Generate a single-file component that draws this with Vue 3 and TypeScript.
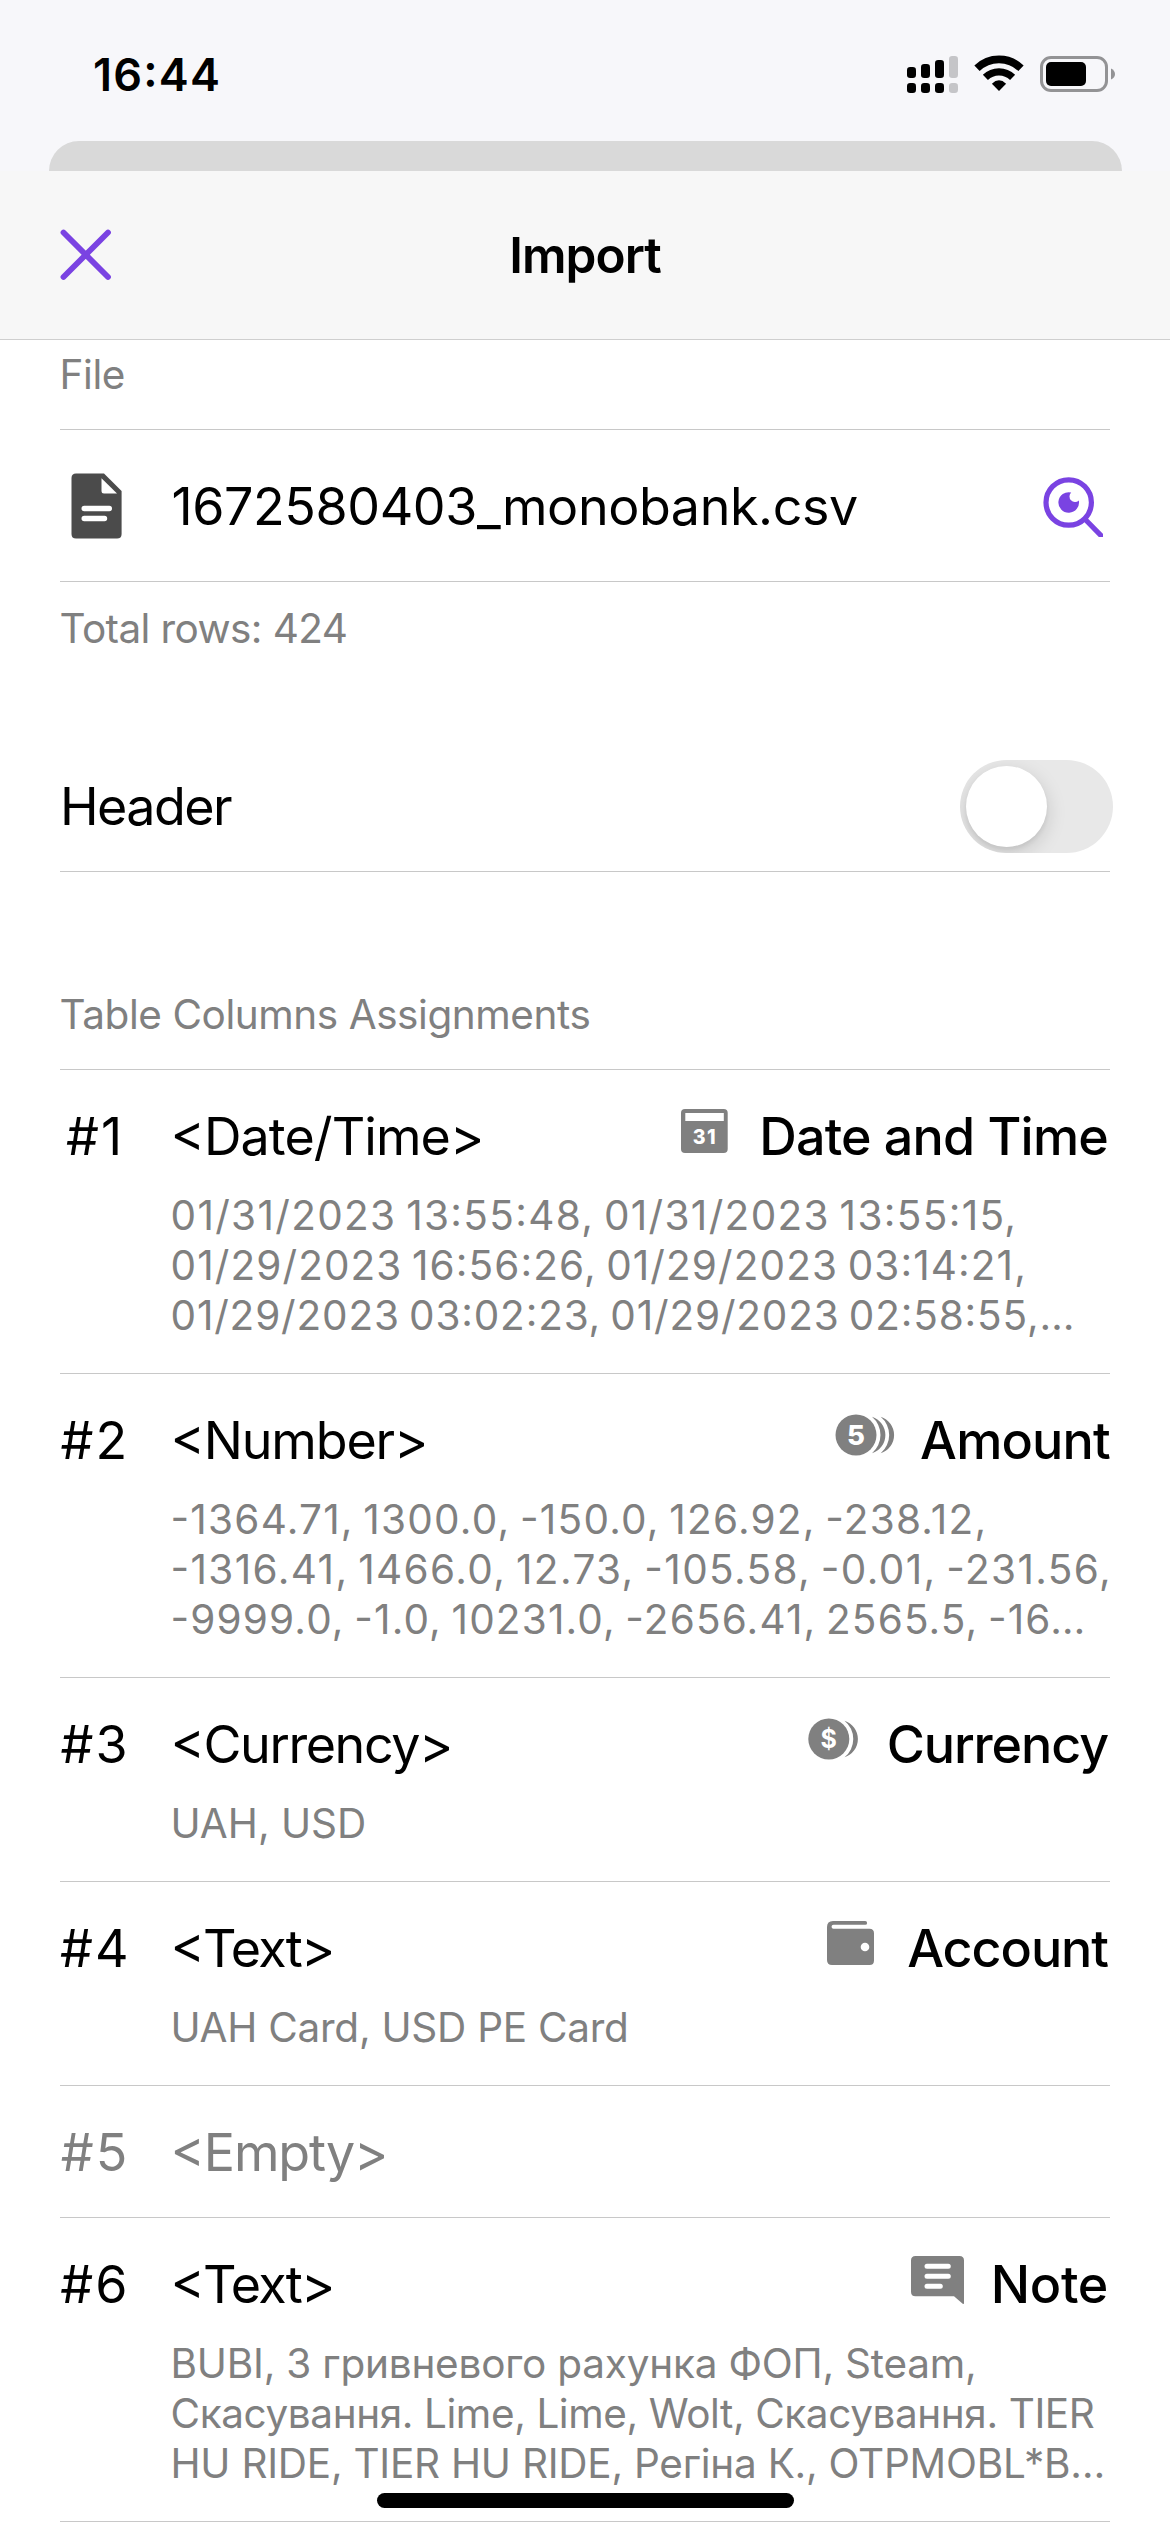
<script setup lang="ts">
import { ref } from 'vue'

type IconName = 'calendar' | 'amount' | 'currency' | 'wallet' | 'note'

interface Line {
  text: string
  tracking: number
}

interface ColumnRow {
  id: number
  type: Line
  target?: Line & { icon: IconName }
  numeric?: boolean
  samples: Line[]
}

const hasHeader = ref(false)

const rows: ColumnRow[] = [
  {
    id: 1,
    type: { text: '<Date/Time>', tracking: -0.92 },
    target: { text: 'Date and Time', tracking: -0.81, icon: 'calendar' },
    numeric: true,
    samples: [
      { text: '01/31/2023 13:55:48, 01/31/2023 13:55:15,', tracking: 1.33 },
      { text: '01/29/2023 16:56:26, 01/29/2023 03:14:21,', tracking: 1.1 },
      { text: '01/29/2023 03:02:23, 01/29/2023 02:58:55,…', tracking: 0.83 },
    ],
  },
  {
    id: 2,
    type: { text: '<Number>', tracking: -1.16 },
    target: { text: 'Amount', tracking: -0.8, icon: 'amount' },
    numeric: true,
    samples: [
      { text: '-1364.71, 1300.0, -150.0, 126.92, -238.12,', tracking: 1.23 },
      { text: '-1316.41, 1466.0, 12.73, -105.58, -0.01, -231.56,', tracking: 1.38 },
      { text: '-9999.0, -1.0, 10231.0, -2656.41, 2565.5, -16…', tracking: 1.16 },
    ],
  },
  {
    id: 3,
    type: { text: '<Currency>', tracking: -1.41 },
    target: { text: 'Currency', tracking: -1.09, icon: 'currency' },
    samples: [{ text: 'UAH, USD', tracking: 0 }],
  },
  {
    id: 4,
    type: { text: '<Text>', tracking: -1.79 },
    target: { text: 'Account', tracking: -1.05, icon: 'wallet' },
    samples: [{ text: 'UAH Card, USD PE Card', tracking: -0.26 }],
  },
  {
    id: 5,
    type: { text: '<Empty>', tracking: -1.13 },
    samples: [],
  },
  {
    id: 6,
    type: { text: '<Text>', tracking: -1.79 },
    target: { text: 'Note', tracking: -0.31, icon: 'note' },
    samples: [
      { text: 'BUBI, З гривневого рахунка ФОП, Steam,', tracking: -0.21 },
      { text: 'Скасування. Lime, Lime, Wolt, Скасування. TIER', tracking: -0.41 },
      { text: 'HU RIDE, TIER HU RIDE, Регіна К., OTPMOBL*B…', tracking: -0.25 },
    ],
  },
]

const spacing = (line: Line) => ({ letterSpacing: `${line.tracking}px` })
</script>

<template>
  <div class="screen">
    <div class="status">
      <span class="clock">16:44</span>
      <svg class="status-icons" width="210" height="42" viewBox="906 53 210 42">
        <rect x="907" y="67" width="9" height="11" rx="3.2" />
        <rect x="921" y="64" width="9" height="14" rx="3.2" />
        <rect x="935" y="60" width="9" height="18" rx="3.2" />
        <rect x="949" y="56" width="9" height="22" rx="3.2" fill="#c5c5c8" />
        <rect x="907" y="83" width="9" height="10" rx="3.2" />
        <rect x="921" y="83" width="9" height="10" rx="3.2" />
        <rect x="935" y="83" width="9" height="10" rx="3.2" />
        <rect x="949" y="83" width="9" height="10" rx="3.2" fill="#c5c5c8" />
        <path d="M977 68.3A31.6 31.6 0 0 1 1021 68.3" fill="none" stroke="#000" stroke-width="7.6" />
        <path d="M985.4 77.4A19.3 19.3 0 0 1 1012.6 77.4" fill="none" stroke="#000" stroke-width="7.2" />
        <path d="M999 91L991.9 83.7Q999 76.8 1006.1 83.7Z" />
        <rect x="1041.5" y="57.5" width="65" height="33" rx="9.5" fill="none" stroke="#939395" stroke-width="3" />
        <rect x="1046" y="62" width="40" height="24" rx="5" />
        <path d="M1111 68.4Q1115 70.4 1115 74T1111 79.6Z" fill="#939395" />
      </svg>
    </div>
    <div class="backdrop-card"></div>

    <div class="navbar">
      <svg class="close" width="52" height="52" viewBox="0 0 52 52">
        <path d="M3.5 3.5L48 48M48 3.5L3.5 48" fill="none" stroke="#7a43e2" stroke-width="5.8" stroke-linecap="round" />
      </svg>
      <h1 class="title">Import</h1>
    </div>

    <main class="content">
      <div class="label file-label">File</div>
      <div class="file-row">
        <svg class="doc" width="52" height="66" viewBox="0 0 52 66">
          <path fill="#4b4b4b" d="M5 .5H33L50.6 18V61Q50.6 65.500 46 65.500H5Q.5 65.500 .5 61V5Q.5 .5 5 .5Z" />
          <path fill="#fff" d="M30.500 5.200L46 20.500H33Q30.500 20.500 30.500 18Z" />
          <path d="M13.200 35.500H38.300M13.200 45.500H33.500" stroke="#fff" stroke-width="5.400" stroke-linecap="round" />
        </svg>
        <span class="filename">1672580403_monobank.csv</span>
        <svg class="preview" width="62" height="62" viewBox="0 0 62 62">
          <g fill="none" stroke="#7a43e2" stroke-width="5.200" stroke-linecap="round">
            <circle cx="27.700" cy="27.500" r="22.700" />
            <path d="M44.300 44.500L60 60.500" />
          </g>
          <path fill="#7a43e2" d="M30.200 17.500A10.300 10.300 0 1 0 37.800 25.500A5.400 5.400 0 0 1 30.200 17.500Z" />
        </svg>
      </div>
      <div class="label total">Total rows: 424</div>

      <div class="header-row">
        <span class="header-text">Header</span>
        <button class="toggle" :class="{ on: hasHeader }" aria-label="Header" @click="hasHeader = !hasHeader">
          <span class="knob"></span>
        </button>
      </div>

      <div class="label table-label">Table Columns Assignments</div>

      <div v-for="row in rows" :key="row.id" class="row" :class="{ empty: !row.target }">
        <div class="index">#{{ row.id }}</div>
        <div class="body">
          <div class="head">
            <span class="type" :style="spacing(row.type)">{{ row.type.text }}</span>
            <div v-if="row.target" class="target">
              <svg class="icon" width="66" height="64" viewBox="0 0 66 64" fill="#808080">
                <template v-if="row.target.icon === 'calendar'">
                  <rect x="10" y="5" width="46.700" height="44" rx="4" />
                  <rect x="14.300" y="9" width="38.500" height="8" fill="#fff" />
                  <text x="34" y="40" class="glyph day">31</text>
                </template>
                <template v-else-if="row.target.icon === 'amount'">
                  <circle cx="24" cy="27" r="20.500" />
                  <path d="M40 8.700A19.200 19.200 0 0 1 40 45.300A24 24 0 0 0 40 8.700Z" />
                  <path d="M48.700 8.700A19.200 19.200 0 0 1 48.700 45.300A24 24 0 0 0 48.700 8.700Z" />
                  <text x="24" y="37" class="glyph five">5</text>
                </template>
                <template v-else-if="row.target.icon === 'currency'">
                  <circle cx="29.800" cy="27" r="20.500" />
                  <path d="M45.500 8.700A19.200 19.200 0 0 1 45.500 45.300A23.500 23.500 0 0 0 45.500 8.700Z" />
                  <text x="29.800" y="36" class="glyph dollar">$</text>
                </template>
                <template v-else-if="row.target.icon === 'wallet'">
                  <path d="M14 5H46.200A1.900 1.900 0 0 1 46.200 8.800H14.500A1.900 1.900 0 0 0 14.500 12.700H50.500Q55 12.700 55 17.200V44.500Q55 49 50.500 49H13Q8 49 8 44V11Q8 5 14 5Z" />
                  <circle cx="46" cy="31" r="4.300" fill="#fff" />
                </template>
                <template v-else>
                  <path d="M12.500 4H56.500Q61 4 61 8.500V51Q61 52.500 59.700 51.700L51 44.300H12.500Q8 44.300 8 39.800V8.500Q8 4 12.500 4Z" />
                  <path d="M24 14.300H45.300M24 24.300H45.300M24 34.300H37.300" stroke="#fff" stroke-width="5" stroke-linecap="round" />
                </template>
              </svg>
              <span class="target-name" :style="spacing(row.target)">{{ row.target.text }}</span>
            </div>
          </div>
          <div v-if="row.samples.length" class="samples" :class="{ numeric: row.numeric }">
            <div v-for="line in row.samples" :key="line.text" :style="spacing(line)">{{ line.text }}</div>
          </div>
        </div>
      </div>
    </main>

    <div class="home-indicator"></div>
  </div>
</template>

<style>
body {
  margin: 0;
  background: #fff;
}
</style>

<style scoped>
.screen {
  position: relative;
  width: 1170px;
  height: 2532px;
  overflow: hidden;
  background: #fff;
  color: #000;
  font-family: Inter, "Noto Sans", sans-serif;
  font-feature-settings: "calt" 1;
  white-space: nowrap;
}

.status {
  display: flex;
  justify-content: space-between;
  align-items: flex-start;
  box-sizing: border-box;
  height: 171px;
  padding: 53px 54px 0 93px;
  background: #f7f7fa;
}

.clock {
  font-size: 45px;
  font-weight: 600;
  line-height: 43px;
  letter-spacing: 1.22px;
}

.backdrop-card {
  height: 30px;
  margin: -30px 48px 0 48.500px;
  border-radius: 30px 30px 0 0;
  background: #d9d9d9;
}

.navbar {
  display: grid;
  grid-template-columns: 52px 1fr 52px;
  align-items: center;
  height: 168px;
  padding: 0 60px;
  background: #f7f7f7;
  border-bottom: 1px solid #cfcfcf;
}

.title {
  margin: 0;
  font-size: 49.500px;
  font-weight: 600;
  line-height: 60px;
  letter-spacing: -0.97px;
  text-align: center;
}

.content {
  padding: 0 60px;
}

.label {
  color: #808080;
  font-size: 40.500px;
  line-height: 50px;
}

.file-label {
  padding: 10px 0 29px;
  letter-spacing: -0.4px;
  text-indent: -0.5px;
}

.file-row {
  display: flex;
  align-items: center;
  box-sizing: border-box;
  height: 153px;
  padding: 0 7px 0 11px;
  border-top: 1px solid #c8c8c8;
  border-bottom: 1px solid #c8c8c8;
}

.filename {
  flex: 1;
  margin-left: 48.500px;
  padding-top: 2px;
  font-size: 52px;
  line-height: 64px;
  letter-spacing: -0.42px;
}

.total {
  padding-top: 22px;
  letter-spacing: -0.6px;
  text-indent: -0.5px;
}

.header-row {
  display: flex;
  align-items: center;
  justify-content: space-between;
  height: 130px;
  margin-top: 87px;
  border-bottom: 1px solid #c8c8c8;
}

.header-text {
  padding-top: 2px;
  font-size: 52px;
  line-height: 64px;
  letter-spacing: -1.56px;
}

.toggle {
  box-sizing: border-box;
  width: 153px;
  height: 93px;
  margin-right: -3px;
  padding: 6px;
  border: 0;
  border-radius: 47px;
  background: #e8e8e8;
  overflow: hidden;
}

.toggle.on {
  background: #7a43e2;
}

.knob {
  display: block;
  width: 81px;
  height: 81px;
  border-radius: 50%;
  background: #fff;
  box-shadow: 0 6px 20px rgba(0, 0, 0, 0.15), 0 3px 4px rgba(0, 0, 0, 0.06);
}

.toggle.on .knob {
  margin-left: 60px;
}

.table-label {
  margin-top: 118px;
  padding-bottom: 29px;
  border-bottom: 1px solid #c8c8c8;
  letter-spacing: -0.44px;
  text-indent: -0.5px;
}

.row {
  display: grid;
  grid-template-columns: 70px 1fr;
  column-gap: 40.500px;
  padding: 35px 0 32px;
  border-bottom: 1px solid #c8c8c8;
}

.index {
  font-size: 52px;
  line-height: 64px;
  letter-spacing: 2.07px;
  text-align: center;
}

.head {
  display: flex;
  justify-content: space-between;
  font-size: 52px;
  line-height: 64px;
}

.target {
  display: flex;
  gap: 22px;
  padding-right: 2px;
  font-weight: 500;
}

.icon {
  margin-top: -1px;
}

.glyph {
  fill: #fff;
  font-weight: 800;
  text-anchor: middle;
}

.day {
  font-size: 19.500px;
  letter-spacing: 1.500px;
}

.five {
  font-size: 27.500px;
}

.dollar {
  font-size: 25px;
  font-weight: 700;
}

.samples {
  margin-top: 22px;
  color: #808080;
  font-size: 40.500px;
  line-height: 50px;
}

.numeric {
  word-spacing: -3px;
}

.empty {
  color: #808080;
}

.home-indicator {
  position: absolute;
  bottom: 24px;
  left: 377px;
  width: 417px;
  height: 15px;
  border-radius: 8px;
  background: #000;
}
</style>
